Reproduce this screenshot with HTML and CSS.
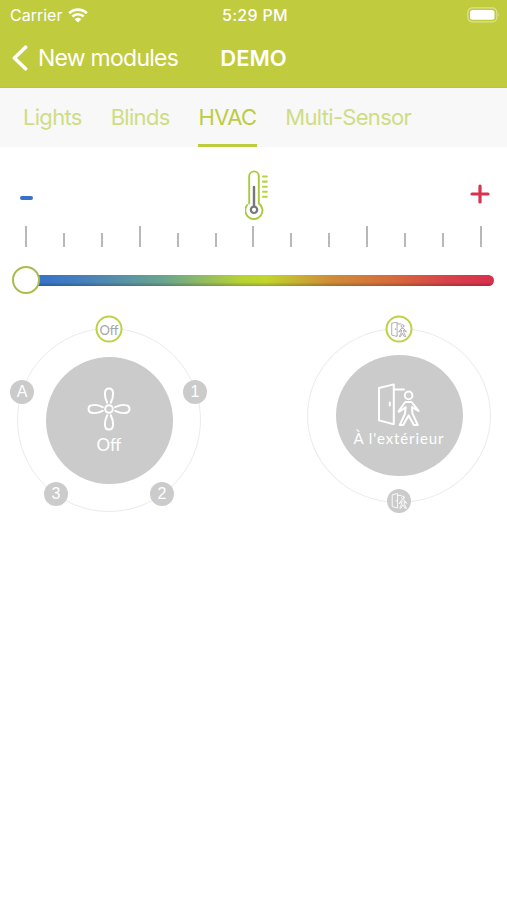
FILE: index.html
```html
<!DOCTYPE html>
<html lang="en">

<head>
    <meta charset="UTF-8">
    <title>DEMO</title>
    <link rel="stylesheet" href="styles.css">
</head>

<body>
    <header class="header">
        <div class="status-bar">
            <div class="carrier">
                <span>Carrier</span>
                <svg class="wifi" width="20" height="15" viewBox="0 0 20 15" fill="none" stroke="#fff" stroke-width="2.6">
                    <path d="M1.2 5.2a12.6 12.6 0 0 1 17.6 0" />
                    <path d="M4.3 8.5a8.2 8.2 0 0 1 11.4 0" />
                    <path d="M10 14.6l-3.3-3.4a4.7 4.7 0 0 1 6.6 0z" fill="#fff" stroke="none" />
                </svg>
            </div>
            <div class="clock">5:29 PM</div>
            <svg class="battery" width="33" height="16" viewBox="0 0 33 16">
                <rect x="0.8" y="0.8" width="29" height="14" rx="4.5" fill="none" stroke="#dbe294" stroke-width="1.2" />
                <rect x="3" y="3" width="24.5" height="9.8" rx="2.5" fill="#fff" />
                <path d="M31.3 5.6q1.6 2.2 0 4.4z" fill="#dbe294" />
            </svg>
        </div>
        <nav class="nav-bar">
            <a class="back">
                <svg width="16" height="26" viewBox="0 0 16 26" fill="none" stroke="#fff" stroke-width="3.6" stroke-linecap="round" stroke-linejoin="round">
                    <path d="M13.6 2.2L2.4 13l11.2 10.8" />
                </svg>
                <span>New modules</span>
            </a>
            <h1 class="title">DEMO</h1>
        </nav>
    </header>

    <div class="tabs">
        <a class="tab">Lights</a>
        <a class="tab">Blinds</a>
        <a class="tab active">HVAC</a>
        <a class="tab">Multi-Sensor</a>
    </div>

    <section class="temperature">
        <div class="temperature-head">
            <span class="minus"></span>
            <svg class="thermometer" width="24" height="50" viewBox="0 0 24 50" fill="none" stroke-linecap="round">
                <g stroke="#a9ca3c" stroke-width="1.9">
                    <path d="M4.2 33.6V6.2a4.8 4.8 0 0 1 9.6 0v27.2a8.6 8.6 0 1 1-11.6 1.6" />
                    <path d="M18 6.5h3.8M18 11.6h3.8M18 16.8h3.8M18 21.8h3.8M18 26.7h3.8" stroke="#b8d33d" stroke-width="2.1" />
                </g>
                <g stroke="#77777b">
                    <path d="M9 17v19" stroke-width="2.4" />
                    <circle cx="9" cy="39.8" r="3.2" stroke-width="2.2" />
                </g>
            </svg>
            <svg class="plus" width="20" height="20" viewBox="0 0 20 20" stroke="#d8334d" stroke-width="3.2" stroke-linecap="round">
                <path d="M10 2v16M2 10h16" />
            </svg>
        </div>
        <div class="scale">
            <i class="major"></i><i></i><i></i>
            <i class="major"></i><i></i><i></i>
            <i class="major"></i><i></i><i></i>
            <i class="major"></i><i></i><i></i>
            <i class="major"></i>
        </div>
        <div class="slider">
            <div class="track"></div>
            <div class="thumb"></div>
        </div>
    </section>

    <!-- door and walking person, shared by the presence dial -->
    <svg class="defs" width="0" height="0">
        <symbol id="door" viewBox="0 0 44 44">
            <g fill="none" stroke="currentColor" stroke-linecap="round" stroke-linejoin="round">
                <path d="M16.8 37.4v3.8L2 37.4V5L16.8 1.4v36" />
                <path d="M16.8 6.6H27M12.8 19.6v2.8" />
                <circle cx="31.6" cy="12.4" r="3.8" />
                <path d="M21.6 28.4l6.6-9.4h6.4l7 8.8M22.2 28.8l6.4-4.4M41.4 28l-6.4-3.8" />
                <path d="M28.6 24.4l-.6 6.4-5.2 11.2h3.4l5.4-9.6 5.2 9.6h4L35.4 30.4l-.4-6.2" />
            </g>
        </symbol>
    </svg>

    <section class="dials">
        <div class="dial fan">
            <div class="knob">
                <svg width="44" height="44" viewBox="0 0 44 44" fill="none" stroke="#fff" stroke-width="2">
                    <circle cx="22" cy="22" r="3.8" />
                    <g stroke-linecap="round" stroke-linejoin="round">
                        <path id="blade" d="M20.2 15.8c-1.8-3.8-2.5-6.4-2.3-9.4.2-6.5 8-6.5 8.2 0 .2 3-.5 5.6-2.3 9.4" />
                        <use href="#blade" transform="rotate(90 22 22)" />
                        <use href="#blade" transform="rotate(180 22 22)" />
                        <use href="#blade" transform="rotate(270 22 22)" />
                    </g>
                </svg>
                <span class="knob-label">Off</span>
            </div>
            <span class="badge selected fan-off">Off</span>
            <span class="badge fan-1">1</span>
            <span class="badge fan-2">2</span>
            <span class="badge fan-3">3</span>
            <span class="badge fan-auto">A</span>
        </div>

        <div class="dial presence">
            <div class="knob">
                <svg class="door" width="44" height="44"><use href="#door" /></svg>
                <span class="knob-label">À l'extérieur</span>
            </div>
            <span class="badge selected outside"><svg class="door-small" width="17" height="16"><use href="#door" /></svg></span>
            <span class="badge inside"><svg class="door-small" width="17" height="16"><use href="#door" /></svg></span>
        </div>
    </section>
</body>

</html>
```

FILE: styles.css
```css
* {
    box-sizing: border-box;
}

body {
    margin: 0;
    min-height: 100vh;
    background-color: #fff;
    font-family: Inter, "Liberation Sans", sans-serif;
}

.header {
    height: 88px;
    background-color: #c0cb3e;
    border-bottom: 1px solid #b7bf62;
    color: #fff;
}

.status-bar {
    display: grid;
    grid-template-columns: 1fr auto 1fr;
    align-items: center;
    height: 30px;
    padding: 0 7px 0 10px;
    font-size: 16px;
}

.carrier {
    display: flex;
    align-items: center;
    gap: 6px;
}

.clock {
    font-weight: 500;
    letter-spacing: 0.3px;
}

.battery {
    justify-self: end;
    margin-top: -1px;
}

.nav-bar {
    display: grid;
    grid-template-columns: 1fr auto 1fr;
    align-items: center;
    height: 56px;
    padding: 0 12px;
}

.back {
    display: flex;
    align-items: center;
    gap: 10px;
    font-size: 23px;
    letter-spacing: -0.75px;
    white-space: nowrap;
}

.title {
    margin: 0;
    font-size: 22px;
    font-weight: 600;
}

.tabs {
    display: flex;
    height: 59px;
    padding-left: 22px;
    gap: 27px;
    background-color: #f8f8f8;
    font-size: 22px;
    line-height: 58px;
    letter-spacing: -0.7px;
    color: #cfdd85;
}

.tab {
    padding: 0 1px;
    border-bottom: 3px solid transparent;
    white-space: nowrap;
}

.tab.active {
    color: #bdcc43;
    border-bottom-color: #bdcc3d;
}

.temperature-head {
    display: grid;
    grid-template-columns: 1fr auto 1fr;
    align-items: center;
    height: 50px;
    margin-top: 23px;
    padding: 0 17px 0 20px;
}

.minus {
    width: 13px;
    height: 4px;
    margin-top: 6px;
    border-radius: 2px;
    background-color: #3672c6;
}

.thermometer {
    margin-left: 3px;
}

.plus {
    justify-self: end;
    margin-top: -2px;
}

.scale {
    display: flex;
    justify-content: space-between;
    align-items: flex-end;
    height: 21px;
    margin: 6px 25px 0;
}

.scale i {
    width: 2px;
    height: 14px;
    background-color: #b8b8b8;
}

.scale .major {
    height: 21px;
}

.slider {
    display: flex;
    align-items: center;
    height: 28px;
    margin-top: 19px;
    padding: 0 13px 0 12px;
}

.track {
    flex: 1;
    order: 2;
    height: 11px;
    margin-left: -3px;
    border-radius: 0 6px 6px 0;
    background: linear-gradient(rgba(0, 0, 0, 0) 65%, rgba(0, 0, 0, 0.22)),
        linear-gradient(90deg, #3672c9 0%, #4680bd 10%, #6ba58d 28%, #b8d334 45%, #c1d62d 50%, #cf8d38 64%, #d66a3c 78%, #d8414b 90%, #d9304d 100%);
}

.thumb {
    z-index: 1;
    width: 28px;
    height: 28px;
    border: 2px solid #a8bd4d;
    border-radius: 50%;
    background-color: #fff;
}

.defs {
    display: block;
}

.dials {
    display: flex;
    justify-content: space-between;
    align-items: flex-start;
    margin-top: 34px;
    padding: 0 16px 0 17px;
}

.dial {
    position: relative;
    display: flex;
    align-items: center;
    justify-content: center;
    width: 184px;
    height: 184px;
    border: 1px solid #ebebeb;
    border-radius: 50%;
}

.presence {
    height: 175px;
}

.knob {
    display: flex;
    flex-direction: column;
    align-items: center;
    width: 127px;
    height: 127px;
    padding-top: 30px;
    border-radius: 50%;
    background-color: #cbcbcb;
    color: #fff;
    font-family: Lato, sans-serif;
}

.presence .knob {
    height: 121px;
    padding-top: 28px;
}

.knob-label {
    margin-top: 5px;
    font-size: 17px;
    line-height: 18px;
    white-space: nowrap;
}

.presence .knob-label {
    margin-top: 2px;
    font-size: 15px;
    letter-spacing: 0.9px;
}

.door {
    stroke-width: 2;
}

.door-small {
    stroke-width: 2.4;
}

/* speed and presence positions sitting on the ring */
.badge {
    position: absolute;
    display: flex;
    align-items: center;
    justify-content: center;
    width: 24px;
    height: 24px;
    border-radius: 50%;
    background-color: #cbcbcb;
    color: #fff;
    font-size: 16px;
    font-family: "Liberation Sans", sans-serif;
    transform: translate(-50%, -50%);
}

.badge.selected {
    width: 27px;
    height: 27px;
    border: 2px solid #bdd246;
    background-color: #fff;
    color: #a4a4a4;
    font-size: 13px;
    font-family: Lato, sans-serif;
}

.fan-off {
    left: 50%;
    top: 0;
}

.fan-1 {
    left: 177px;
    top: 63px;
}

.fan-2 {
    left: 144px;
    top: 165px;
}

.fan-3 {
    left: 38px;
    top: 165px;
}

.fan-auto {
    left: 4px;
    top: 63px;
}

.outside {
    left: 50%;
    top: 0;
}

.inside {
    left: 50%;
    top: 172px;
}
```
